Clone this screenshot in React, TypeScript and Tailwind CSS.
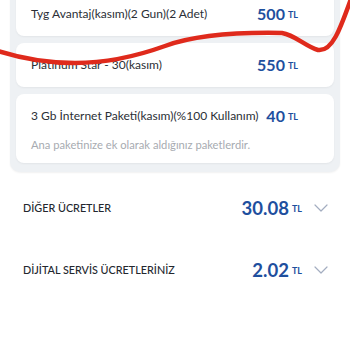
import { ReactNode } from 'react'

type Addon = {
  title: string
  price: string
  note?: string
}

const addons: Addon[] = [
  { title: 'Tyg Avantaj(kasım)(2 Gun)(2 Adet)', price: '500' },
  { title: 'Platinum Star - 30(kasım)', price: '550' },
  {
    title: '3 Gb İnternet Paketi(kasım)(%100 Kullanım)',
    price: '40',
    note: 'Ana paketinize ek olarak aldığınız paketlerdir.',
  },
]

const fees = [
  { label: 'DİĞER ÜCRETLER', amount: '30.08' },
  { label: 'DİJİTAL SERVİS ÜCRETLERİNİZ', amount: '2.02' },
]

function Price({ value, big }: { value: string; big?: boolean }): ReactNode {
  return (
    <span className="flex items-center gap-[3px] font-bold text-[#1e4f9e]">
      <span className={big ? 'text-[18.5px] leading-none' : 'text-[16px] leading-none'}>{value}</span>
      <span className="text-[9px] leading-none">TL</span>
    </span>
  )
}

function Chevron() {
  return (
    <svg width="14" height="8" viewBox="0 0 14 8" fill="none" aria-hidden="true">
      <path d="M1 1L7 7L13 1" stroke="#a3adc0" strokeWidth="1.2" strokeLinecap="round" strokeLinejoin="round" />
    </svg>
  )
}

export default function App() {
  return (
    <div className="relative h-[350px] w-[350px] overflow-hidden bg-white font-['Lato',sans-serif]">
      <div className="mx-[10px] -mt-[8px] flex flex-col gap-[7px] rounded-b-[10px] bg-[#eef1f4] px-[6px] pb-[9px] shadow-[0_1px_2px_rgba(0,0,0,0.06)]">
        {addons.map((a) => (
          <div
            key={a.title}
            className="rounded-[8px] bg-white pl-[15px] pr-[36px] shadow-[0_1px_2px_rgba(0,0,0,0.05)]"
          >
            <div className="flex h-[44px] items-center justify-between">
              <span className="whitespace-nowrap text-[12px] text-[#2b2f36]">{a.title}</span>
              <Price value={a.price} />
            </div>
            {a.note && (
              <p className="mt-[1px] whitespace-nowrap pb-[13px] text-[11.2px] leading-none text-[#a7abb1]">
                {a.note}
              </p>
            )}
          </div>
        ))}
      </div>

      <div className="mt-[5px] flex flex-col">
        {fees.map((f) => (
          <div key={f.label} className="flex h-[62px] items-center justify-between pl-[23px] pr-[22px]">
            <span className="text-[10.8px] font-medium text-[#23272e]">{f.label}</span>
            <div className="flex items-center gap-[12px]">
              <Price value={f.amount} big />
              <Chevron />
            </div>
          </div>
        ))}
      </div>

      {/* red pen mark drawn over the screenshot */}
      <svg
        className="pointer-events-none absolute left-0 top-0"
        width="350"
        height="350"
        viewBox="0 0 350 350"
        fill="none"
        aria-hidden="true"
      >
        <path
          d="M-2 51 C 20 58, 45 63, 75 63 C 110 63, 140 55, 165 46 C 190 37, 230 32, 282 33 C 295 35, 305 46, 318 50 C 332 52, 340 30, 352 -4"
          stroke="#df2a1c"
          strokeWidth="4.5"
          strokeLinecap="round"
          strokeLinejoin="round"
        />
      </svg>
    </div>
  )
}
